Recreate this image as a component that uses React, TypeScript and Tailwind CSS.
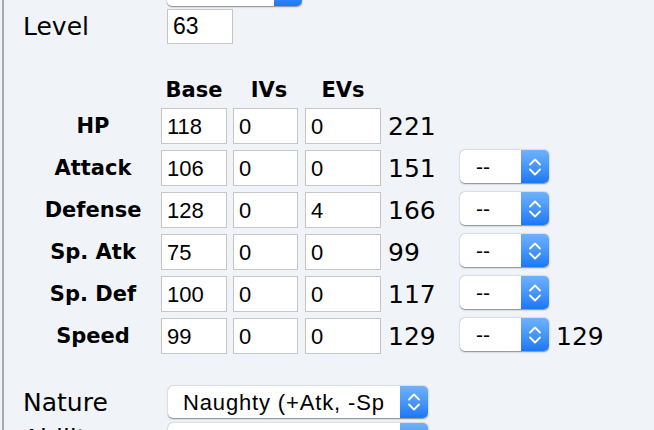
import React from "react";

const Chevrons = () => (
  <svg width="14" height="20" viewBox="0 0 14 20" fill="none" stroke="white" strokeWidth="1.8" strokeLinecap="round" strokeLinejoin="round">
    <path d="M2 7.5 L7 2.5 L12 7.5" />
    <path d="M2 12.5 L7 17.5 L12 12.5" />
  </svg>
);

function Select({ text, className, textClass }: { text: string; className: string; textClass?: string }) {
  return (
    <div className={`flex shrink-0 rounded-[5px] bg-white shadow-[0_0.5px_1.5px_rgba(0,0,0,0.45)] ${className}`}>
      <div className={`flex-1 min-w-0 overflow-hidden whitespace-nowrap flex items-center font-['Liberation_Sans',sans-serif] text-black ${textClass ?? ""}`}>
        {text}
      </div>
      <div className="w-[28px] shrink-0 rounded-r-[5px] bg-gradient-to-b from-[#6eb2fb] to-[#1a78f5] flex items-center justify-center">
        <Chevrons />
      </div>
    </div>
  );
}

const Input = ({ value, className }: { value: string; className: string }) => (
  <div className={`h-[36px] shrink-0 bg-white border border-[#c6c6c6] flex items-center pl-[5px] font-['Liberation_Sans',sans-serif] text-[22px] text-black ${className}`}>
    {value}
  </div>
);

const rows = [
  { name: "HP", base: "118", iv: "0", ev: "0", total: "221", sel: false, extra: "" },
  { name: "Attack", base: "106", iv: "0", ev: "0", total: "151", sel: true, extra: "" },
  { name: "Defense", base: "128", iv: "0", ev: "4", total: "166", sel: true, extra: "" },
  { name: "Sp. Atk", base: "75", iv: "0", ev: "0", total: "99", sel: true, extra: "" },
  { name: "Sp. Def", base: "100", iv: "0", ev: "0", total: "117", sel: true, extra: "" },
  { name: "Speed", base: "99", iv: "0", ev: "0", total: "129", sel: true, extra: "129" },
];

export default function App() {
  return (
    <div className="w-[654px] h-[430px] overflow-hidden bg-[#f0f4f9] font-['DejaVu_Sans',sans-serif] text-black">
      <div className="ml-[2px] h-full border-l-2 border-[#a9a9a9] flex flex-col">
        {/* top partially visible select */}
        <div className="flex mt-[-26px] pl-[163px]">
          <Select text="" className="w-[135px] h-[32px]" />
        </div>
        {/* Level */}
        <div className="flex items-center mt-[3px] h-[35px]">
          <div className="w-[163px] pl-[19px] text-[25px] leading-none">Level</div>
          <div className="h-[35px] w-[66px] bg-white border border-[#c6c6c6] flex items-center pl-[5px] font-['Liberation_Sans',sans-serif] text-[23px]">
            63
          </div>
        </div>
        {/* header */}
        <div className="flex items-center h-[24px] mt-[36px] mb-[7px] font-bold text-[21px] leading-none">
          <div className="w-[157px]" />
          <div className="w-[66px] text-center">Base</div>
          <div className="w-[72px] text-center ml-[6px]">IVs</div>
          <div className="w-[76px] text-center">EVs</div>
        </div>
        {/* stat rows */}
        <div className="flex flex-col gap-[6px]">
          {rows.map((r) => (
            <div key={r.name} className="flex items-center h-[36px]">
              <div className="ml-[36px] w-[106px] text-center font-bold text-[21px] leading-none whitespace-nowrap">{r.name}</div>
              <Input value={r.base} className="ml-[15px] w-[66px]" />
              <Input value={r.iv} className="ml-[6px] w-[65px]" />
              <Input value={r.ev} className="ml-[7px] w-[76px]" />
              <div className="ml-[7px] w-[72px] text-[25px] leading-none">{r.total}</div>
              {r.sel && (
                <Select text="--" className="w-[89px] h-[33px] self-start" textClass="pl-[16px] text-[21px]" />
              )}
              {r.extra && <div className="ml-[7px] text-[25px] leading-none">{r.extra}</div>}
            </div>
          ))}
        </div>
        {/* Nature */}
        <div className="flex items-center mt-[32px] h-[32px]">
          <div className="w-[164px] pl-[19px] text-[25px] leading-none">Nature</div>
          <Select text="Naughty (+Atk, -SpD)" className="w-[260px] h-[32px]" textClass="ml-[15px] mr-[15px] text-[22px] tracking-[0.85px]" />
        </div>
        {/* Ability */}
        <div className="flex items-start mt-[5px] h-[32px]">
          <div className="w-[164px] pl-[19px] text-[25px] leading-none pt-[3px]">Ability</div>
          <Select text="Sand Stream" className="w-[260px] h-[32px]" textClass="ml-[15px] mr-[15px] text-[22px] tracking-[0.85px]" />
        </div>
      </div>
    </div>
  );
}
